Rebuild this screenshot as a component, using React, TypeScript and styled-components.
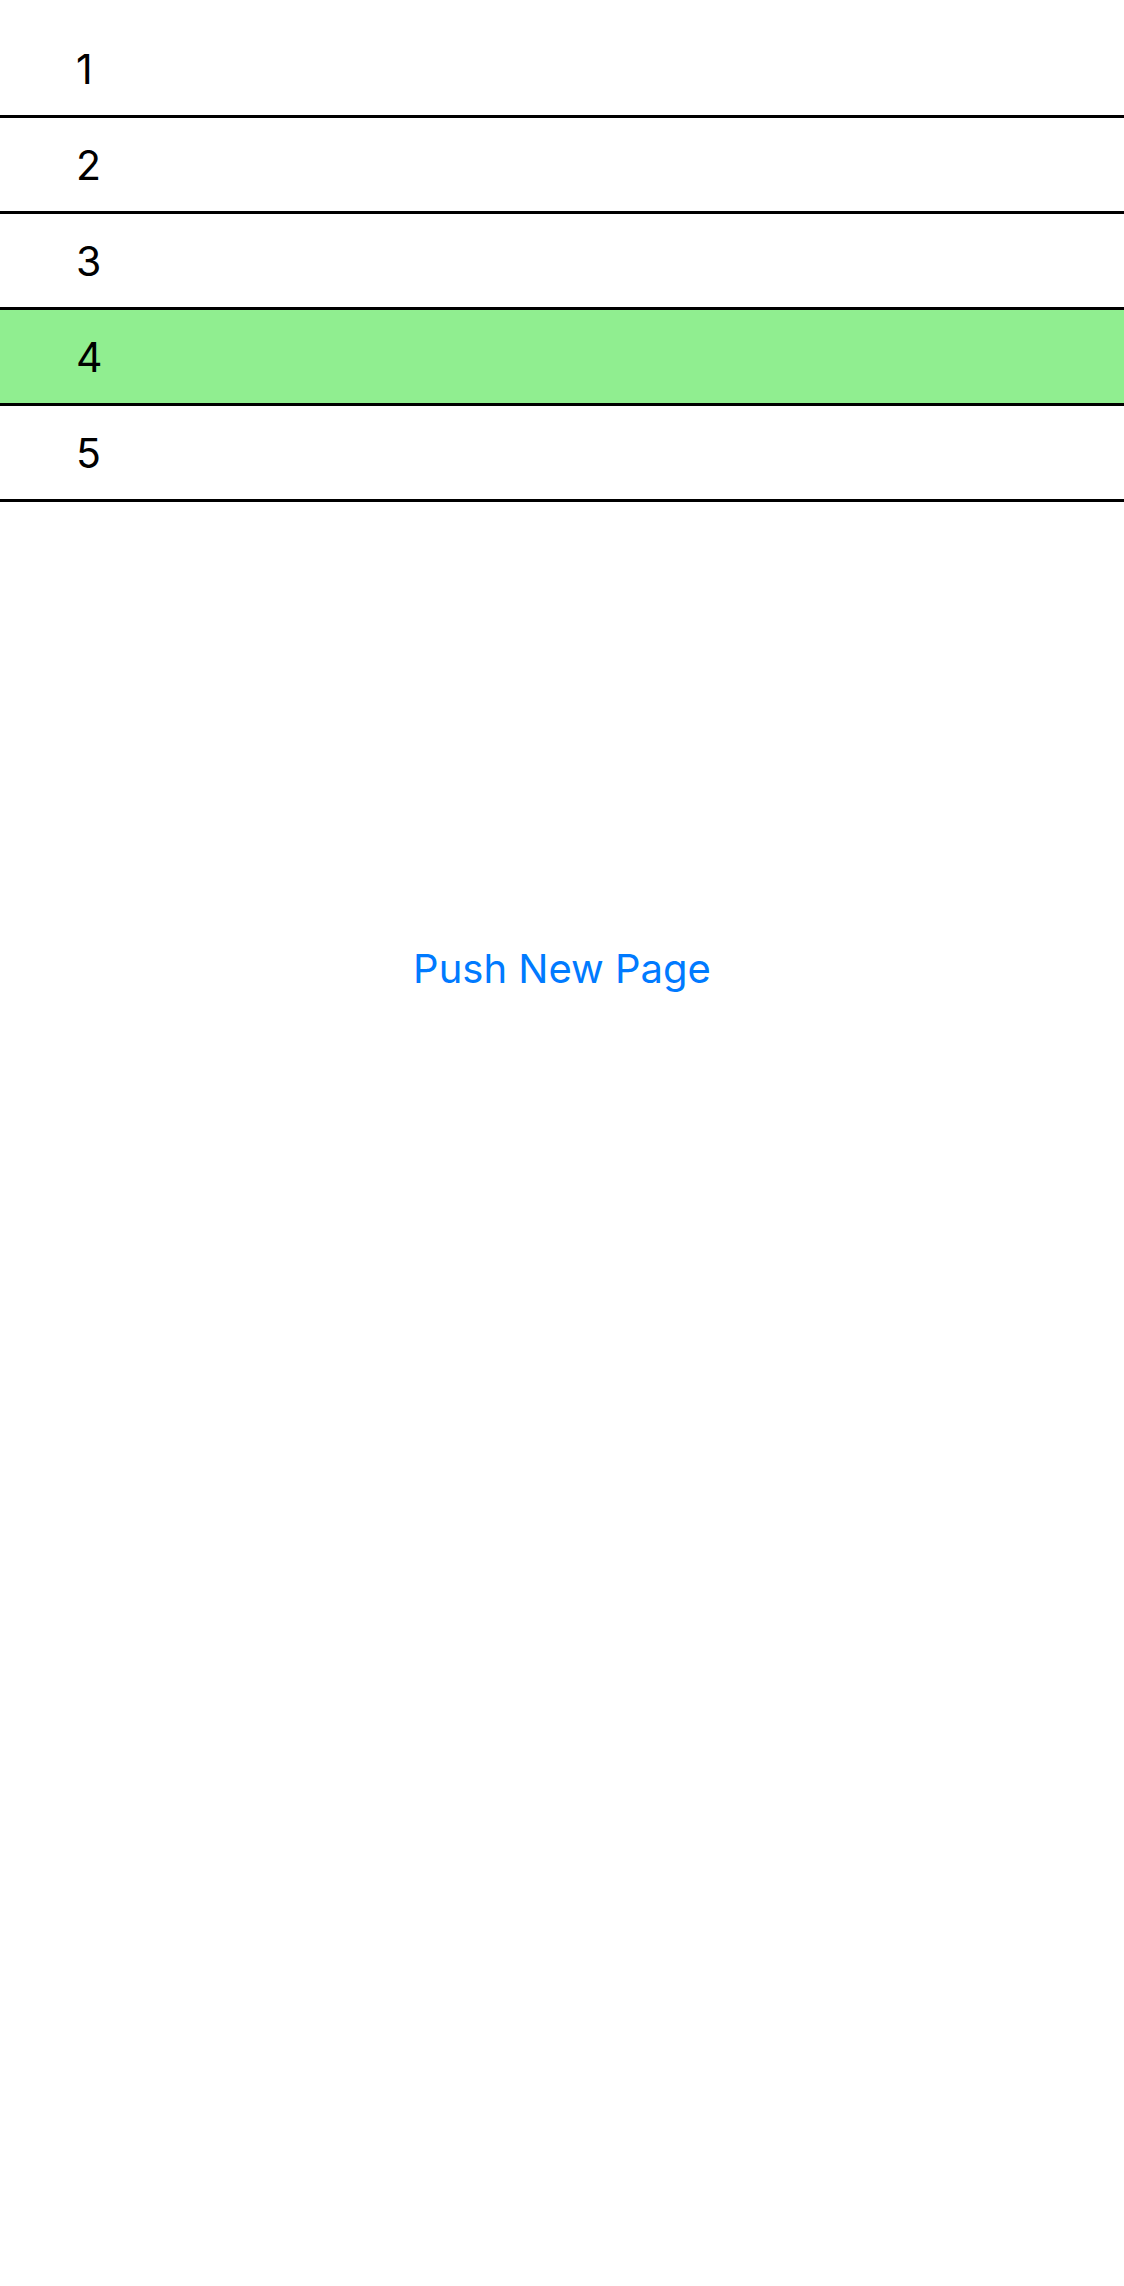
import React from 'react';
import styled, { createGlobalStyle } from 'styled-components';

const GlobalStyle = createGlobalStyle`
  html, body {
    margin: 0;
    padding: 0;
    background: #ffffff;
  }
  body {
    font-family: Inter, "Liberation Sans", Arial, sans-serif;
  }
`;

const Screen = styled.div`
  width: 1124px;
  min-height: 2286px;
  display: flex;
  flex-direction: column;
  padding-top: 22px;
  box-sizing: border-box;
  background: #fff;
`;

const List = styled.div`
  display: flex;
  flex-direction: column;
`;

const Row = styled.div<{ $selected?: boolean }>`
  height: 96px;
  box-sizing: border-box;
  border-bottom: 3px solid #000;
  background: ${(p) => (p.$selected ? '#90ee90' : 'transparent')};
  display: flex;
  align-items: center;
  padding-left: 76px;
  font-size: 41px;
  color: #000;
`;

const ButtonArea = styled.div`
  display: flex;
  justify-content: center;
  padding-top: 442px;
`;

const LinkButton = styled.button`
  background: none;
  border: none;
  padding: 0;
  font-family: inherit;
  font-size: 40px;
  color: #007aff;
  cursor: pointer;
`;

const items = [1, 2, 3, 4, 5];

const App: React.FC = () => {
  return (
    <>
      <GlobalStyle />
      <Screen>
        <List>
          {items.map((n) => (
            <Row key={n} $selected={n === 4}>
              {n}
            </Row>
          ))}
        </List>
        <ButtonArea>
          <LinkButton>Push New Page</LinkButton>
        </ButtonArea>
      </Screen>
    </>
  );
};

export default App;
